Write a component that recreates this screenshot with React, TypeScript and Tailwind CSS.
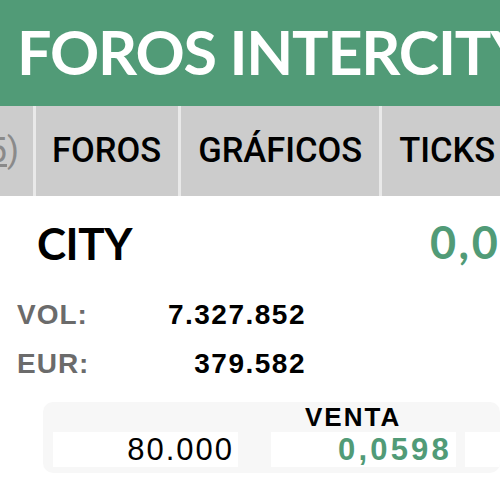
export default function App() {
  const rounded = { fontFamily: 'Lato, "Noto Sans", sans-serif' };
  const android = { fontFamily: 'Roboto, "Noto Sans", sans-serif' };
  const helv = { fontFamily: '"Liberation Sans", Arial, sans-serif' };

  return (
    <div className="w-[500px] h-[498px] overflow-hidden bg-white">
      {/* cabecera */}
      <div className="h-[106px] bg-[#519b77] flex items-center pl-[17px] overflow-hidden">
        <span style={rounded} className="text-white text-[61px] leading-none whitespace-nowrap font-bold tracking-[-1.2px] pb-[4px]">
          FOROS INTERCITY
        </span>
      </div>

      {/* pestañas */}
      <div style={android} className="h-[90px] bg-[#cccccc] flex items-center whitespace-nowrap overflow-hidden text-[34.5px] text-black font-medium">
        <div className="w-[33px] shrink-0 flex justify-end overflow-hidden text-[#8a8a8a] font-normal">
          <span className="pr-[14px]">
            (<span className="underline">5</span>)
          </span>
        </div>
        <div className="w-[3px] h-full shrink-0 bg-[#e9e9e9]" />
        <div className="pl-[16px] pr-[17px] shrink-0">FOROS</div>
        <div className="w-[3px] h-full shrink-0 bg-[#e9e9e9]" />
        <div className="px-[17px] shrink-0">GRÁFICOS</div>
        <div className="w-[3px] h-full shrink-0 bg-[#e9e9e9]" />
        <div className="px-[17px] shrink-0">TICKS</div>
      </div>

      {/* valor */}
      <div className="flex items-center h-[94px] whitespace-nowrap overflow-hidden">
        <span style={rounded} className="pl-[37px] text-[44px] font-bold text-black tracking-[-0.5px] w-[430px] shrink-0">CITY</span>
        <span style={rounded} className="text-[45px] font-bold text-[#519b77] tracking-[2.5px]">0,0598</span>
      </div>

      <div style={helv} className="pl-[17px] w-[306px] text-[28px] font-bold">
        <div className="flex justify-between h-[49px] items-center">
          <span className="text-[#6b6b6b] tracking-[1px]">VOL:</span>
          <span className="text-black tracking-[1.5px]">7.327.852</span>
        </div>
        <div className="flex justify-between h-[49px] items-center">
          <span className="text-[#6b6b6b] tracking-[1px]">EUR:</span>
          <span className="text-black tracking-[1.5px]">379.582</span>
        </div>
      </div>

      {/* libro */}
      <div style={helv} className="ml-[43px] mt-[14px] h-[71px] rounded-[10px] bg-[#f7f7f7] pl-[10px] pt-[2px] whitespace-nowrap overflow-hidden">
        <div className="pl-[252px] text-[26px] font-bold leading-[26px] text-black tracking-[2px]">VENTA</div>
        <div className="flex mt-[2px] h-[35px]">
          <div className="w-[185px] shrink-0 bg-white text-right pr-[4px] text-[31px] leading-[36px] text-black tracking-[2px]">80.000</div>
          <div className="w-[185px] ml-[33px] shrink-0 bg-white text-right pr-[4px] text-[31px] leading-[36px] font-bold text-[#519b77] tracking-[3.2px]">0,0598</div>
          <div className="w-[100px] ml-[9px] shrink-0 bg-white" />
        </div>
      </div>
    </div>
  );
}
